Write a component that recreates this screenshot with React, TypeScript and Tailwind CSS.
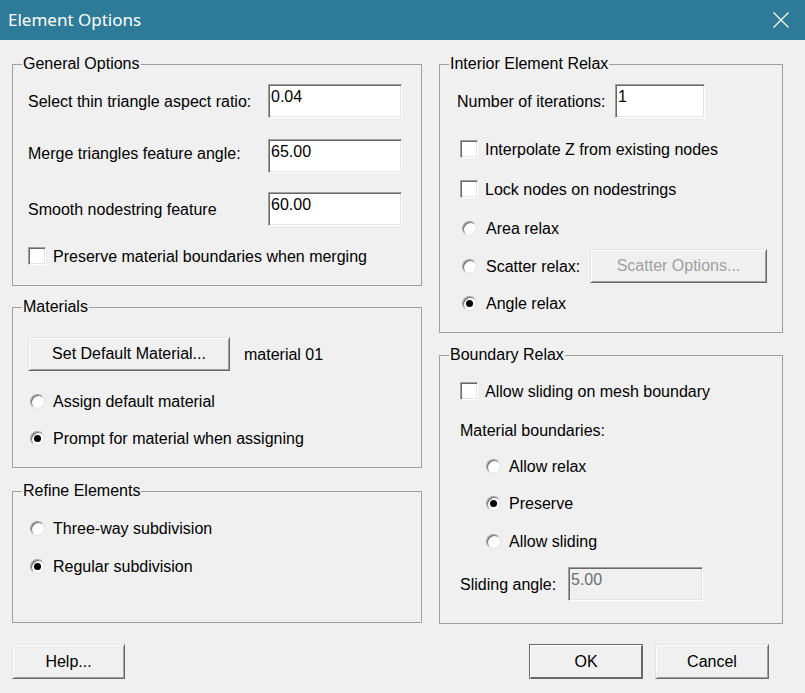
import React from "react";

const sunken =
  "border border-t-[#a0a0a0] border-l-[#a0a0a0] border-r-white border-b-white shadow-[inset_1px_1px_0_#696969,inset_-1px_-1px_0_#e3e3e3]";
const raised =
  "border border-t-[#e3e3e3] border-l-[#e3e3e3] border-r-[#696969] border-b-[#696969] shadow-[inset_1px_1px_0_#ffffff,inset_-1px_-1px_0_#a0a0a0] bg-[#f0f0f0]";

function Radio({ checked, label, labelMl = "ml-[8px]" }: { checked?: boolean; label: string; labelMl?: string }) {
  return (
    <div className="flex items-center h-[18px]">
      <span className="flex items-center justify-center w-[15px] h-[15px] rounded-full bg-white border border-t-[#a0a0a0] border-l-[#a0a0a0] border-r-[#e3e3e3] border-b-[#e3e3e3] shadow-[inset_1px_1px_0_#696969]">
        {checked && <span className="w-[7px] h-[7px] rounded-full bg-black" />}
      </span>
      <span className={`${labelMl} pt-[2px]`}>{label}</span>
    </div>
  );
}

function Check({ label }: { label: string }) {
  return (
    <div className="flex items-center h-[18px]">
      <span className={`w-[18px] h-[18px] bg-white ${sunken}`} />
      <span className="ml-[7px] pt-[1px]">{label}</span>
    </div>
  );
}

function Field({ value, w, disabled }: { value: string; w: string; disabled?: boolean }) {
  return (
    <div
      className={`${w} h-[34px] pt-[3px] pl-[2px] ${sunken} ${
        disabled ? "bg-[#f0f0f0] text-[#6d6d6d]" : "bg-white text-black"
      }`}
    >
      {value}
    </div>
  );
}

function Group({ title, h, className = "", children }: { title: string; h: string; className?: string; children: React.ReactNode }) {
  return (
    <fieldset className={`border border-[#a0a0a0] ${h} min-w-0 ${className}`}>
      <legend className="ml-[9px] px-[1px] leading-[18px]">{title}</legend>
      {children}
    </fieldset>
  );
}

export default function App() {
  return (
    <div className="w-[805px] h-[693px] bg-[#f0f0f0] font-['Liberation_Sans',Arial,sans-serif] text-[16px] leading-[18px] text-black overflow-hidden">
      <div className="h-[40px] bg-[#2e7b99] flex items-center justify-between">
        <span className="ml-[8px] text-white font-['Noto_Sans',sans-serif] text-[17px] leading-[20px]">
          Element Options
        </span>
        <svg className="mr-[16px]" width="16" height="16" viewBox="0 0 16 16">
          <path d="M0.5 0.5 L15.5 15.5 M15.5 0.5 L0.5 15.5" stroke="white" strokeWidth="1.2" fill="none" />
        </svg>
      </div>

      <div className="pt-[15px] pl-[12px] flex">
        <div className="w-[410px] flex flex-col">
          <Group title="General Options" h="h-[231px]">
            <div className="flex flex-col">
              <div className="flex items-center h-[34px] mt-[11px] ml-[15px]">
                <span className="w-[240px] pt-[1px]">Select thin triangle aspect ratio:</span>
                <Field value="0.04" w="w-[134px]" />
              </div>
              <div className="flex items-center h-[34px] mt-[21px] ml-[15px]">
                <span className="w-[240px] -mt-[4px]">Merge triangles feature angle:</span>
                <Field value="65.00" w="w-[134px]" />
              </div>
              <div className="flex items-center h-[34px] mt-[19px] ml-[15px]">
                <span className="w-[240px] pt-[1px]">Smooth nodestring feature</span>
                <Field value="60.00" w="w-[134px]" />
              </div>
              <div className="mt-[21px] ml-[15px]">
                <Check label="Preserve material boundaries when merging" />
              </div>
            </div>
          </Group>

          <Group title="Materials" h="h-[170px]" className="mt-[12px]">
            <div className="flex flex-col">
              <div className="flex items-center h-[34px] mt-[21px] ml-[15px]">
                <button className={`w-[202px] h-[34px] ${raised}`}>Set Default Material...</button>
                <span className="ml-[14px] pt-[1px]">material 01</span>
              </div>
              <div className="mt-[21px] ml-[17px]">
                <Radio label="Assign default material" />
              </div>
              <div className="mt-[19px] ml-[17px]">
                <Radio checked label="Prompt for material when assigning" />
              </div>
            </div>
          </Group>

          <Group title="Refine Elements" h="h-[141px]" className="mt-[14px]">
            <div className="flex flex-col">
              <div className="mt-[19px] ml-[17px]">
                <Radio label="Three-way subdivision" />
              </div>
              <div className="mt-[20px] ml-[17px]">
                <Radio checked label="Regular subdivision" />
              </div>
            </div>
          </Group>
        </div>

        <div className="ml-[17px] w-[344px] flex flex-col">
          <Group title="Interior Element Relax" h="h-[278px]">
            <div className="flex flex-col">
              <div className="flex items-center h-[34px] mt-[11px] ml-[17px]">
                <span className="w-[158px] pt-[1px]">Number of iterations:</span>
                <Field value="1" w="w-[90px]" />
              </div>
              <div className="mt-[22px] ml-[20px]">
                <Check label="Interpolate Z from existing nodes" />
              </div>
              <div className="mt-[22px] ml-[20px]">
                <Check label="Lock nodes on nodestrings" />
              </div>
              <div className="mt-[21px] ml-[22px]">
                <Radio label="Area relax" labelMl="ml-[9px]" />
              </div>
              <div className="flex items-center h-[34px] mt-[12px] ml-[22px]">
                <span className="flex items-center justify-center w-[15px] h-[15px] rounded-full bg-white border border-t-[#a0a0a0] border-l-[#a0a0a0] border-r-[#e3e3e3] border-b-[#e3e3e3] shadow-[inset_1px_1px_0_#696969]" />
                <span className="ml-[9px] w-[104px] pt-[2px]">Scatter relax:</span>
                <button className={`w-[177px] h-[34px] text-[#a0a0a0] ${raised}`}>Scatter Options...</button>
              </div>
              <div className="mt-[11px] ml-[22px]">
                <Radio checked label="Angle relax" labelMl="ml-[9px]" />
              </div>
            </div>
          </Group>

          <Group title="Boundary Relax" h="h-[278px]" className="mt-[13px]">
            <div className="flex flex-col">
              <div className="mt-[18px] ml-[20px]">
                <Check label="Allow sliding on mesh boundary" />
              </div>
              <div className="mt-[22px] ml-[20px] h-[18px]">Material boundaries:</div>
              <div className="mt-[17px] ml-[46px]">
                <Radio label="Allow relax" />
              </div>
              <div className="mt-[19px] ml-[46px]">
                <Radio checked label="Preserve" />
              </div>
              <div className="mt-[20px] ml-[46px]">
                <Radio label="Allow sliding" />
              </div>
              <div className="flex items-center h-[34px] mt-[17px] ml-[20px]">
                <span className="w-[108px] pt-[2px]">Sliding angle:</span>
                <Field value="5.00" w="w-[135px]" disabled />
              </div>
            </div>
          </Group>
        </div>
      </div>

      <div className="mt-[20px] flex pl-[12px] pr-[36px]">
        <button className={`w-[113px] h-[35px] ${raised}`}>Help...</button>
        <button className="ml-auto w-[114px] h-[35px] bg-[#f0f0f0] border border-[#696969] shadow-[inset_1px_1px_0_#ffffff,inset_-1px_-1px_0_#696969]">
          OK
        </button>
        <button className={`ml-[12px] w-[114px] h-[35px] ${raised}`}>Cancel</button>
      </div>
    </div>
  );
}
